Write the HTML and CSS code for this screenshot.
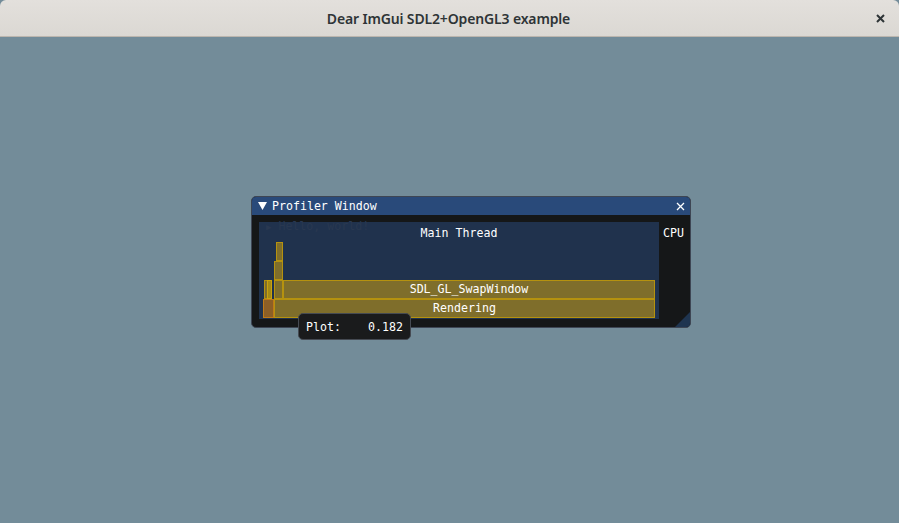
FILE: index.html
```html
<!DOCTYPE html>
<html>
<head>
<meta charset="utf-8">
<link rel="stylesheet" href="styles.css">
</head>
<body>
<div class="app">
  <header class="os-bar">
    <span class="os-title">Dear ImGui SDL2+OpenGL3 example</span>
    <svg class="os-close" width="9" height="9" viewBox="0 0 9 9"><path d="M1 1L8 8M8 1L1 8" stroke="#2e3436" stroke-width="2"/></svg>
  </header>
  <main class="desktop">
    <section class="win">
      <div class="win-title">
        <svg class="tri" width="9" height="8" viewBox="0 0 9 8"><path d="M0 0H9L4.5 8Z" fill="#fff"/></svg>
        <span class="win-name">Profiler Window</span>
        <svg class="close" width="9" height="9" viewBox="0 0 9 9"><path d="M1 1L8 8M8 1L1 8" stroke="#fff" stroke-width="1.3"/></svg>
      </div>
      <div class="win-body">
        <div class="plot">
          <div class="plot-label">Main Thread</div>
          <div class="ghost"><span class="ghost-tri">▶</span> Hello, world!</div>
          <div class="bar" style="left:17px;top:20px;width:7px;height:19px"></div>
          <div class="bar" style="left:15px;top:39px;width:9px;height:19px"></div>
          <div class="bar" style="left:5px;top:58px;width:4px;height:19px"></div>
          <div class="bar bright" style="left:8px;top:58px;width:5px;height:19px"></div>
          <div class="bar" style="left:15px;top:58px;width:9px;height:19px"></div>
          <div class="bar label" style="left:24px;top:58px;width:372px;height:19px">SDL_GL_SwapWindow</div>
          <div class="bar hot" style="left:4px;top:77px;width:11px;height:19px"></div>
          <div class="bar label" style="left:15px;top:77px;width:381px;height:19px">Rendering</div>
        </div>
        <div class="cpu">CPU</div>
      </div>
      <div class="grip"></div>
    </section>
    <div class="tooltip">
      <span>Plot:</span>
      <span>0.182</span>
    </div>
  </main>
</div>
</body>
</html>
```
FILE: styles.css
```css
html, body {
  margin: 0;
  padding: 0;
}
body {
  width: 899px;
  height: 523px;
  overflow: hidden;
  background: #738c99;
}
.app {
  display: flex;
  flex-direction: column;
  height: 523px;
}
.os-bar {
  height: 36px;
  flex: none;
  display: flex;
  align-items: center;
  justify-content: center;
  position: relative;
  background: linear-gradient(#e3e0dc, #dbd8d3);
  border-bottom: 1px solid #bcb6ae;
  border-radius: 6px 6px 0 0;
  font-family: "Noto Sans", "DejaVu Sans", sans-serif;
  font-size: 14px;
  font-weight: 600;
  color: #2e3436;
}
.os-title {
  letter-spacing: -0.15px;
  margin-left: -2px;
}
.os-close {
  position: absolute;
  right: 14px;
  top: 14px;
}
.desktop {
  flex: 1;
  position: relative;
  background: #738c99;
  font-family: "DejaVu Sans Mono", "Liberation Mono", monospace;
  font-size: 11.6px;
  color: #ffffff;
}
.win {
  position: absolute;
  left: 251px;
  top: 159px;
  width: 438px;
  height: 130px;
  border: 1px solid #3e4654;
  border-radius: 5px;
  background: #151718;
  overflow: hidden;
  display: flex;
  flex-direction: column;
}
.win-title {
  height: 18px;
  flex: none;
  background: #294a7a;
  display: flex;
  align-items: center;
  padding: 0 5px 0 6px;
  gap: 5px;
}
.win-name {
  flex: 1;
  line-height: 18px;
}
.win-body {
  flex: 1;
  display: flex;
  padding: 7px 0 8px 7px;
  gap: 4px;
}
.plot {
  position: relative;
  width: 400px;
  height: 97px;
  background: #20324d;
  flex: none;
}
.plot-label {
  text-align: center;
  line-height: 14px;
  padding-top: 4px;
}
.ghost {
  position: absolute;
  left: 7px;
  top: -3px;
  color: #293850;
  line-height: 14px;
}
.ghost-tri {
  font-size: 9px;
}
.cpu {
  line-height: 14px;
  padding-top: 4px;
}
.bar {
  position: absolute;
  box-sizing: border-box;
  background: #7f6e2b;
  border: 1px solid #b5920f;
}
.bar.bright {
  background: #a48a16;
  border-color: #c9a20d;
}
.bar.hot {
  background: #8c5f27;
  border-color: #c07a16;
}
.bar.label {
  text-align: center;
  line-height: 17px;
  color: #fff;
}
.grip {
  position: absolute;
  right: 0;
  bottom: 0;
  width: 0;
  height: 0;
  border-left: 15px solid transparent;
  border-bottom: 15px solid #1f3550;
}
.tooltip {
  position: absolute;
  left: 298px;
  top: 276px;
  width: 113px;
  height: 27px;
  box-sizing: border-box;
  border: 1px solid #454a52;
  border-radius: 5px;
  background: #1a1b1c;
  display: flex;
  justify-content: space-between;
  align-items: center;
  padding: 1px 7px 0 7px;
}
```
